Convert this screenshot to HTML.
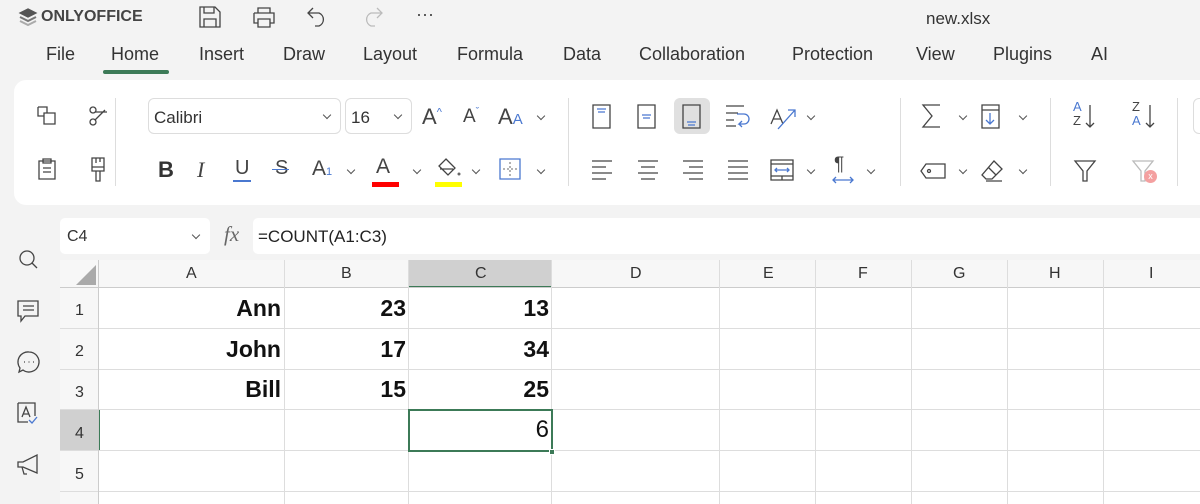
<!DOCTYPE html>
<html><head><meta charset="utf-8"><style>
*{margin:0;padding:0;box-sizing:border-box}
body{width:1200px;height:504px;overflow:hidden;background:#f3f3f3;font-family:"Liberation Sans",sans-serif;color:#333;position:relative}
.a{position:absolute}
.menu span{position:absolute;top:44px;font-size:18px;color:#333}
svg{position:absolute;overflow:visible}
svg *{fill:none;stroke:#444;stroke-width:1.3}
.bl{stroke:#4a78d0}
.tb{position:absolute;left:14px;top:80px;width:1200px;height:125px;background:#fff;border-radius:12px}
.sep{position:absolute;width:1px;background:#ddd;top:98px;height:88px}
.dd{position:absolute;width:6px;height:6px;border-right:1.3px solid #555;border-bottom:1.3px solid #555;transform:rotate(45deg);margin-left:2px;margin-top:3px}
.sel{position:absolute;width:6px;height:6px;border-right:1.3px solid #555;border-bottom:1.3px solid #555;transform:rotate(45deg)}
.grid div{position:absolute}
.cell{font-family:"Liberation Sans",sans-serif;font-weight:bold;font-size:23px;color:#111;text-align:right}
</style></head><body>
<svg style="left:18px;top:7px" width="20" height="20"><path d="M10 2 L18 6 L10 10 L2 6Z" style="fill:#555;stroke:#555"/><path d="M2 10 L10 14 L18 10" style="stroke:#777;stroke-width:2"/><path d="M2 14 L10 18 L18 14" style="stroke:#aaa;stroke-width:2"/></svg>
<div class="a" style="left:41px;top:8px;font-size:16px;font-weight:bold;color:#444">ONLYOFFICE</div>
<svg style="left:199px;top:6px" width="22" height="22"><path d="M1 1h15l5 5v15H1z M5 1v6h10V1 M5 21v-8h12v8"/></svg>
<svg style="left:253px;top:7px" width="22" height="20"><path d="M5 6V1h12v5 M1 6h20v10h-4 M5 16H1V6 M5 12h12v8H5z"/></svg>
<svg style="left:307px;top:7px" width="22" height="20"><path d="M6 1L1 6l5 5 M1 6h11a7 7 0 0 1 0 13h-4"/></svg>
<svg style="left:361px;top:7px" width="22" height="20"><path d="M16 1l5 5-5 5 M21 6H10a7 7 0 0 0 0 13h4" style="stroke:#bbb"/></svg>
<div class="a" style="left:416px;top:4px;font-size:18px;color:#444">···</div>
<div class="a" style="left:926px;top:9px;font-size:17px;color:#333">new.xlsx</div>
<div class="menu">
<span style="left:46px">File</span><span style="left:111px">Home</span><span style="left:199px">Insert</span><span style="left:283px">Draw</span><span style="left:363px">Layout</span><span style="left:457px">Formula</span><span style="left:563px">Data</span><span style="left:639px">Collaboration</span><span style="left:792px">Protection</span><span style="left:916px">View</span><span style="left:993px">Plugins</span><span style="left:1091px">AI</span>
</div>
<div class="a" style="left:103px;top:70px;width:66px;height:4px;border-radius:2px;background:#3c7a57"></div>
<div class="tb"></div>
<div class="sep" style="left:115px"></div><div class="sep" style="left:568px"></div><div class="sep" style="left:900px"></div><div class="sep" style="left:1050px"></div><div class="sep" style="left:1177px"></div>
<svg style="left:37px;top:106px" width="20" height="20"><path d="M1 1h9v6 M1 1v9h6 M7 7h11v11H7z"/></svg>
<svg style="left:88px;top:106px" width="20" height="20"><circle cx="5" cy="4" r="3"/><circle cx="5" cy="16" r="3"/><path d="M7 6l12 0 M7 14L17 4"/></svg>
<svg style="left:37px;top:158px" width="20" height="22"><path d="M2 3h16v18H2z M6 1h8v4H6z M6 10h8 M6 14h8"/></svg>
<svg style="left:90px;top:157px" width="16" height="26"><path d="M2 1h12v13H2z M2 10h12 M6 14v10h4V14 M6 1v5 M10 1v4"/></svg>
<div class="a" style="left:148px;top:98px;width:193px;height:36px;border:1px solid #ddd;border-radius:6px;font-size:17px;padding:9px 5px">Calibri<span class="sel" style="right:10px;top:13px"></span></div>
<div class="a" style="left:345px;top:98px;width:67px;height:36px;border:1px solid #ddd;border-radius:6px;font-size:17px;padding:9px 5px">16<span class="sel" style="right:10px;top:13px"></span></div>
<div class="a" style="left:422px;top:104px;font-size:22px;color:#444">A<sup style="font-size:11px;color:#4a78d0">^</sup></div>
<div class="a" style="left:463px;top:106px;font-size:19px;color:#444">A<sup style="font-size:10px;color:#4a78d0">ˇ</sup></div>
<div class="a" style="left:498px;top:104px;font-size:22px;color:#444">A<span style="font-size:15px;color:#4a78d0">A</span></div>
<div class="dd" style="left:536px;top:110px"></div>
<div class="a" style="left:158px;top:157px;font-size:22px;font-weight:bold;color:#333">B</div>
<div class="a" style="left:197px;top:157px;font-size:22px;font-style:italic;color:#444;font-family:'Liberation Serif'">I</div>
<div class="a" style="left:235px;top:157px;font-size:20px;color:#444">U</div><div class="a" style="left:233px;top:180px;width:18px;height:2px;background:#4a78d0"></div>
<div class="a" style="left:275px;top:157px;font-size:20px;color:#444">S</div><div class="a" style="left:272px;top:169px;width:17px;height:1px;background:#4a78d0"></div>
<div class="a" style="left:312px;top:157px;font-size:21px;color:#444">A<span style="font-size:11px;color:#4a78d0">1</span></div>
<div class="dd" style="left:346px;top:164px"></div>
<div class="a" style="left:376px;top:155px;font-size:21px;color:#444">A</div><div class="a" style="left:372px;top:182px;width:27px;height:5px;background:#f00"></div>
<div class="dd" style="left:412px;top:164px"></div>
<svg style="left:437px;top:158px" width="24" height="22"><path d="M9 1l9 9-7 7-9-9z M3 11h13"/><circle cx="22" cy="16" r="1.5" style="fill:#666;stroke:none"/></svg><div class="a" style="left:435px;top:182px;width:27px;height:5px;background:#ff0"></div>
<div class="dd" style="left:471px;top:164px"></div>
<svg style="left:499px;top:158px" width="22" height="22"><path class="bl" d="M1 1h20v20H1z"/><path d="M11 4v14 M4 11h14" style="stroke:#888;stroke-dasharray:2 2"/></svg>
<div class="dd" style="left:536px;top:164px"></div>
<svg style="left:592px;top:104px" width="20" height="26"><path d="M1 1h17v23H1z"/><path class="bl" d="M5 5h9 M6 8h7"/></svg>
<svg style="left:637px;top:104px" width="20" height="26"><path d="M1 1h17v23H1z"/><path class="bl" d="M5 11h9 M6 14h7"/></svg>
<div class="a" style="left:674px;top:98px;width:36px;height:36px;background:#e0e0e0;border-radius:6px"></div>
<svg style="left:682px;top:104px" width="20" height="26"><path d="M1 1h17v23H1z"/><path class="bl" d="M5 18h9 M6 21h7"/></svg>
<svg style="left:725px;top:105px" width="24" height="22"><path d="M1 1h18 M1 8h12 M1 15h8 M1 21h10"/><path class="bl" d="M12 9h7a5 5 0 0 1 0 10h-5 l3-3 M14 19l3 3"/></svg>
<svg style="left:770px;top:104px" width="26" height="26"><path d="M1 20l6-14 6 14 M3 15h8"/><path class="bl" d="M8 25L25 6 M18 6h7v7"/></svg>
<div class="dd" style="left:806px;top:110px"></div>
<svg style="left:591px;top:160px" width="22" height="20"><path d="M1 1h20 M1 7h14 M1 13h20 M1 19h14"/></svg>
<svg style="left:637px;top:160px" width="22" height="20"><path d="M1 1h20 M4 7h14 M1 13h20 M4 19h14"/></svg>
<svg style="left:682px;top:160px" width="22" height="20"><path d="M1 1h20 M7 7h14 M1 13h20 M7 19h14"/></svg>
<svg style="left:727px;top:160px" width="22" height="20"><path d="M1 1h20 M1 7h20 M1 13h20 M1 19h20"/></svg>
<svg style="left:770px;top:159px" width="24" height="22"><path d="M1 1h22v20H1z M1 5h22 M1 17h22 M12 17v4"/><path class="bl" d="M5 11h14 M7 9l-2 2 2 2 M17 9l2 2-2 2"/></svg>
<div class="dd" style="left:806px;top:164px"></div>
<div class="a" style="left:834px;top:154px;font-size:19px;color:#444">¶</div>
<svg style="left:832px;top:176px" width="22" height="8"><path class="bl" d="M1 4h20 M4 1L1 4l3 3 M18 1l3 3-3 3"/></svg>
<div class="dd" style="left:866px;top:164px"></div>
<svg style="left:922px;top:104px" width="20" height="24"><path d="M18 1H1l9 11-9 11h17"/></svg>
<div class="dd" style="left:958px;top:110px"></div>
<svg style="left:981px;top:104px" width="20" height="26"><path d="M1 1h17v23H1z M1 6h17"/><path class="bl" d="M9 9v11 M5 16l4 4 4-4"/></svg>
<div class="dd" style="left:1018px;top:110px"></div>
<svg style="left:920px;top:163px" width="26" height="16"><path d="M6 1h19v14H6L1 8z"/><circle cx="9" cy="8" r="1.5"/></svg>
<div class="dd" style="left:958px;top:164px"></div>
<svg style="left:981px;top:160px" width="22" height="22"><path d="M13 1l8 8-10 10H5l-4-4z M7 7l8 8 M5 21h16"/></svg>
<div class="dd" style="left:1018px;top:164px"></div>
<div class="a" style="left:1073px;top:100px;font-size:13px;line-height:14px;color:#4a78d0">A<br><span style="color:#444">Z</span></div>
<svg style="left:1085px;top:104px" width="10" height="24"><path d="M5 1v22 M1 19l4 4 4-4"/></svg>
<div class="a" style="left:1132px;top:100px;font-size:13px;line-height:14px;color:#444">Z<br><span style="color:#4a78d0">A</span></div>
<svg style="left:1145px;top:104px" width="10" height="24"><path d="M5 1v22 M1 19l4 4 4-4"/></svg>
<svg style="left:1074px;top:160px" width="22" height="22"><path d="M1 1h20l-8 10v10h-4V11z"/></svg>
<svg style="left:1132px;top:160px" width="22" height="22"><path d="M1 1h20l-8 10v10h-4V11z" style="stroke:#bbb"/></svg>
<div class="a" style="left:1144px;top:170px;width:13px;height:13px;border-radius:50%;background:#f4a0a0;color:#fff;font-size:9px;text-align:center;line-height:13px">x</div>
<div class="a" style="left:1193px;top:98px;width:20px;height:36px;border:1px solid #ddd;border-radius:6px"></div>
<svg style="left:19px;top:250px" width="20" height="20"><circle cx="8" cy="8" r="7"/><path d="M13 13l5 5"/></svg>
<svg style="left:17px;top:300px" width="24" height="24"><path d="M1 1h20v15H8l-4 5v-5H1z M6 6h11 M6 10h11"/></svg>
<svg style="left:17px;top:351px" width="24" height="24"><path d="M12 1a10 10 0 1 1-6 18l-4 2 1-4A10 10 0 0 1 12 1z"/><path d="M7 11h1 M11.5 11h1 M16 11h1"/></svg>
<svg style="left:17px;top:402px" width="22" height="22"><path d="M1 1h17v13 M1 1v19h10"/><path d="M5 15l4-10 4 10 M6.5 12h5"/><path class="bl" d="M12 18l3 3 5-6"/></svg>
<svg style="left:17px;top:454px" width="22" height="22"><path d="M1 8h5l14-7v18L6 13H1z M5 13l2 7h3"/></svg>
<div class="a" style="left:60px;top:218px;width:150px;height:36px;background:#fff;border-radius:5px;font-size:16px;padding:10px 7px;color:#333">C4<span class="sel" style="right:11px;top:14px"></span></div>
<div class="a" style="left:224px;top:222px;font-size:21px;font-style:italic;font-family:'Liberation Serif';color:#666">fx</div>
<div class="a" style="left:253px;top:218px;width:960px;height:36px;background:#fff;border-radius:5px;font-size:17px;padding:9px 5px;color:#222">=COUNT(A1:C3)</div>
<div class="a" style="left:60px;top:260px;width:1140px;height:244px;background:#fff"></div>
<div class="a" style="left:60px;top:260px;width:1140px;height:28px;background:#f7f7f7"></div>
<div class="a" style="left:60px;top:260px;width:39px;height:244px;background:#f7f7f7"></div>
<div class="a" style="left:409px;top:260px;width:143px;height:28px;background:#d0d0d0"></div>
<div class="a" style="left:409px;top:286px;width:143px;height:2px;background:#3c7a57"></div>
<div class="a" style="left:60px;top:410px;width:39px;height:41px;background:#d0d0d0"></div>
<div class="a" style="left:98px;top:410px;width:2px;height:41px;background:#3c7a57"></div>
<svg style="left:75px;top:264px" width="22" height="22"><path d="M21 1v20H1z" style="fill:#aaa;stroke:none"/></svg>
<div class="grid">
<div style="left:60px;top:287px;width:1140px;height:1px;background:#ccc"></div>
<div style="left:60px;top:328px;width:1140px;height:1px;background:#ddd"></div>
<div style="left:60px;top:369px;width:1140px;height:1px;background:#ddd"></div>
<div style="left:60px;top:409px;width:1140px;height:1px;background:#ddd"></div>
<div style="left:60px;top:450px;width:1140px;height:1px;background:#ddd"></div>
<div style="left:60px;top:491px;width:1140px;height:1px;background:#ddd"></div>
<div style="left:98px;top:260px;width:1px;height:244px;background:#ccc"></div>
<div style="left:284px;top:260px;width:1px;height:244px;background:#ddd"></div>
<div style="left:408px;top:260px;width:1px;height:244px;background:#ddd"></div>
<div style="left:551px;top:260px;width:1px;height:244px;background:#ddd"></div>
<div style="left:719px;top:260px;width:1px;height:244px;background:#ddd"></div>
<div style="left:815px;top:260px;width:1px;height:244px;background:#ddd"></div>
<div style="left:911px;top:260px;width:1px;height:244px;background:#ddd"></div>
<div style="left:1007px;top:260px;width:1px;height:244px;background:#ddd"></div>
<div style="left:1103px;top:260px;width:1px;height:244px;background:#ddd"></div>
</div>
<div class="a" style="top:265px;left:0;width:1200px;font-size:16px;color:#333">
<span class="a" style="left:186px">A</span><span class="a" style="left:341px">B</span><span class="a" style="left:475px">C</span><span class="a" style="left:630px">D</span><span class="a" style="left:763px">E</span><span class="a" style="left:858px">F</span><span class="a" style="left:953px">G</span><span class="a" style="left:1049px">H</span><span class="a" style="left:1149px">I</span>
</div>
<div class="a" style="left:60px;width:39px;text-align:center;font-size:16px;color:#333">
<div class="a" style="top:302px;width:39px">1</div><div class="a" style="top:343px;width:39px">2</div><div class="a" style="top:384px;width:39px">3</div><div class="a" style="top:425px;width:39px">4</div><div class="a" style="top:466px;width:39px">5</div>
</div>
<div class="a cell" style="left:100px;top:295px;width:181px">Ann</div>
<div class="a cell" style="left:100px;top:336px;width:181px">John</div>
<div class="a cell" style="left:100px;top:376px;width:181px">Bill</div>
<div class="a cell" style="left:285px;top:295px;width:121px">23</div>
<div class="a cell" style="left:285px;top:336px;width:121px">17</div>
<div class="a cell" style="left:285px;top:376px;width:121px">15</div>
<div class="a cell" style="left:409px;top:295px;width:140px">13</div>
<div class="a cell" style="left:409px;top:336px;width:140px">34</div>
<div class="a cell" style="left:409px;top:376px;width:140px">25</div>
<div class="a" style="left:408px;top:409px;width:145px;height:43px;border:2px solid #3c7a57"></div>
<div class="a" style="left:549px;top:449px;width:6px;height:6px;background:#3c7a57;border:1px solid #fff"></div>
<div class="a" style="left:409px;top:416px;width:140px;text-align:right;font-size:24px;color:#111">6</div>
</body></html>
